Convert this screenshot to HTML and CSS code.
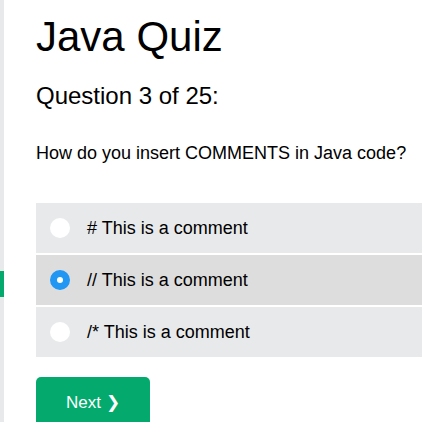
FILE: index.html
```html
<!DOCTYPE html>
<html lang="en">
<head>
<meta charset="utf-8">
<title>Java Quiz</title>
<link rel="stylesheet" href="styles.css">
</head>
<body>
<div class="page">
  <aside class="sidebar"><div class="sidebar-mark"></div></aside>
  <main class="content">
    <h1 class="title">Java Quiz</h1>
    <h2 class="counter">Question 3 of 25:</h2>
    <p class="question">How do you insert COMMENTS in Java code?</p>
    <div class="options">
      <label class="option"><span class="radio"></span><span class="option-text"># This is a comment</span></label>
      <label class="option selected"><span class="radio checked"></span><span class="option-text">// This is a comment</span></label>
      <label class="option"><span class="radio"></span><span class="option-text">/* This is a comment</span></label>
    </div>
    <button class="next-btn">Next ❯</button>
  </main>
</div>
</body>
</html>
```
FILE: styles.css
```css
html, body {
  margin: 0;
  padding: 0;
  overflow: hidden;
  background: #ffffff;
}
body {
  font-family: "Liberation Sans", Arial, sans-serif;
  color: #000000;
}
.page {
  display: flex;
  min-height: 422px;
}
.sidebar {
  width: 4px;
  flex: 0 0 4px;
  background: #e7e9eb;
}
.sidebar-mark {
  margin-top: 271px;
  height: 26px;
  background: #04aa6d;
}
.content {
  flex: 1;
  padding-left: 32px;
  padding-top: 13px;
}
.title {
  margin: 0;
  font-size: 42px;
  line-height: 48px;
  font-weight: normal;
}
.counter {
  margin: 21px 0 0;
  font-size: 24px;
  line-height: 28px;
  font-weight: normal;
}
.question {
  margin: 32px 0 0;
  font-size: 18px;
  line-height: 22px;
}
.options {
  margin-top: 39px;
  display: flex;
  flex-direction: column;
  gap: 2px;
}
.option {
  display: flex;
  align-items: center;
  height: 50px;
  padding-left: 14px;
  background: #e7e9eb;
  font-size: 18px;
}
.option.selected {
  background: #dddddd;
}
.radio {
  width: 20px;
  height: 20px;
  border-radius: 50%;
  background: #ffffff;
  box-sizing: border-box;
  flex: 0 0 20px;
  margin-right: 17px;
}
.radio.checked {
  background: #ffffff;
  border: 7px solid #2196f3;
}
.next-btn {
  margin-top: 20px;
  display: block;
  border: none;
  border-radius: 5px;
  background: #04aa6d;
  color: #ffffff;
  font-family: "Liberation Sans", Arial, sans-serif;
  font-size: 17px;
  line-height: 22px;
  padding: 15px 30px 13px;
  width: 114px;
  text-align: left;
}
```
